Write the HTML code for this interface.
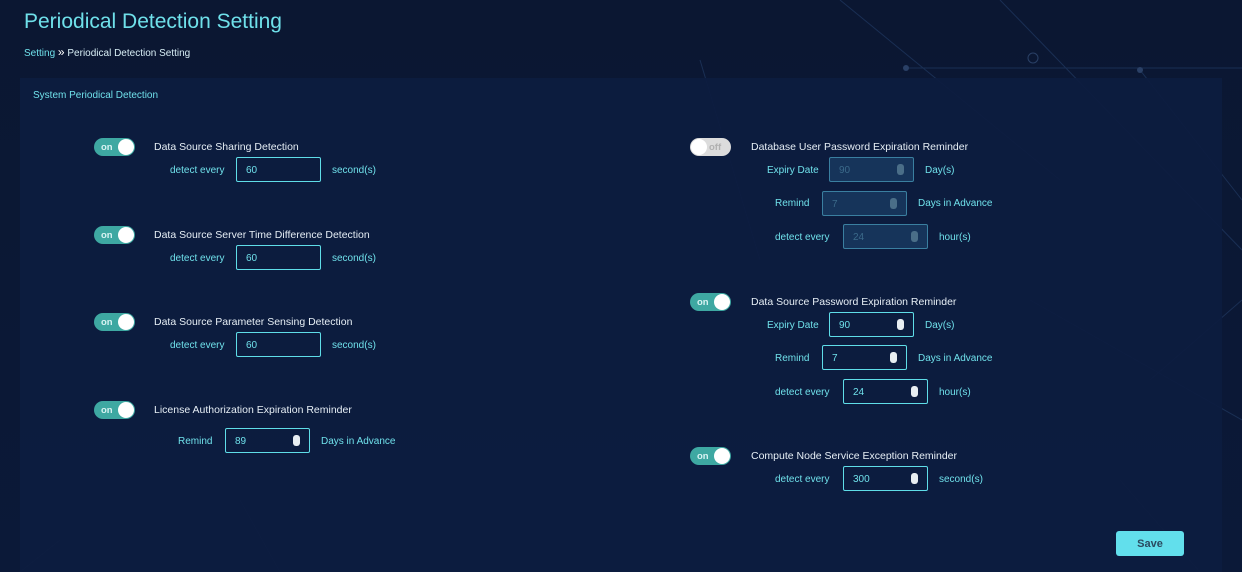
<!DOCTYPE html>
<html><head><meta charset="utf-8"><style>
*{margin:0;padding:0;box-sizing:border-box}
body{width:1242px;height:572px;overflow:hidden;background:linear-gradient(180deg,#0b1732 0%,#0b1938 100%);font-family:"Liberation Sans",sans-serif;position:relative;color:#6fe0ea}
.a{position:absolute;white-space:nowrap}
h1{position:absolute;left:24px;top:10px;font-size:21px;font-weight:normal;color:#6fe0ea}
.panel{position:absolute;left:20px;top:78px;width:1202px;height:494px;background:#0d1c3f;opacity:.95}
.lbl{font-size:10.5px;color:#e6eef5;margin-top:1px}
.t{font-size:10px;color:#6fe0ea;margin-top:1px}
.tg{position:absolute;width:41px;height:18px;border-radius:9px;background:#3ea8a2}
.tg:after{content:"";position:absolute;right:1px;top:1px;width:16px;height:16px;border-radius:50%;background:#fff}
.tg span{position:absolute;left:7px;top:4px;font-size:9.5px;font-weight:bold;color:#d8f3f3}
.tg.off{background:#dcdcdc}
.tg.off:after{left:1px;right:auto}
.tg.off span{left:19px;color:#b0b0b0}
.in{position:absolute;height:25px;border:1.5px solid #5fdde8;border-radius:2px;font-size:10px;color:#6fe0ea;padding:7px 0 0 9px}
.in.d{border-color:#3a7fa0;background:#16345a;color:#3b6a8a}
.sp{position:absolute;right:9px;top:6px;width:7px;height:11px;border-radius:3px;background:#e8eef2}
.in.d .sp{background:#4a6e88}
.btn{position:absolute;left:1116px;top:531px;width:68px;height:25px;background:#62dfec;border-radius:3px;font-size:11px;font-weight:bold;color:#2a4a60;text-align:center;line-height:26px}
</style></head><body>
<svg class="a" style="left:0;top:0" width="1242" height="572"><g stroke="#1a2f54" stroke-width="1" fill="none">
<line x1="840" y1="0" x2="1060" y2="180"/><line x1="905" y1="68" x2="1242" y2="68"/><line x1="1140" y1="70" x2="1242" y2="200"/><line x1="1000" y1="0" x2="1242" y2="250"/><line x1="1030" y1="300" x2="1242" y2="420"/><line x1="1150" y1="380" x2="1242" y2="300"/><line x1="60" y1="540" x2="20" y2="572"/><line x1="240" y1="500" x2="280" y2="572"/><line x1="700" y1="60" x2="760" y2="260"/><line x1="1120" y1="480" x2="1200" y2="572"/>
</g><circle cx="1033" cy="58" r="5" fill="none" stroke="#2a4066"/><circle cx="906" cy="68" r="3" fill="#2a4066"/><circle cx="1140" cy="70" r="3" fill="#2a4066"/></svg>
<h1>Periodical Detection Setting</h1>
<div class="a" style="left:24px;top:45px;font-size:10px;color:#6fe0ea">Setting <span style="color:#fff;font-size:12px">»</span> <span style="color:#d8eef5">Periodical Detection Setting</span></div>
<div class="panel"></div>
<div class="a t" style="left:33px;top:89px">System Periodical Detection</div>

<div class="tg" style="left:94px;top:138px"><span>on</span></div>
<div class="a lbl" style="left:154px;top:140px">Data Source Sharing Detection</div>
<div class="a t" style="left:170px;top:164px">detect every</div><div class="in" style="left:236px;top:157px;width:85px">60</div><div class="a t" style="left:332px;top:164px">second(s)</div>

<div class="tg" style="left:94px;top:226px"><span>on</span></div>
<div class="a lbl" style="left:154px;top:228px">Data Source Server Time Difference Detection</div>
<div class="a t" style="left:170px;top:252px">detect every</div><div class="in" style="left:236px;top:245px;width:85px">60</div><div class="a t" style="left:332px;top:252px">second(s)</div>

<div class="tg" style="left:94px;top:313px"><span>on</span></div>
<div class="a lbl" style="left:154px;top:315px">Data Source Parameter Sensing Detection</div>
<div class="a t" style="left:170px;top:339px">detect every</div><div class="in" style="left:236px;top:332px;width:85px">60</div><div class="a t" style="left:332px;top:339px">second(s)</div>

<div class="tg" style="left:94px;top:401px"><span>on</span></div>
<div class="a lbl" style="left:154px;top:403px">License Authorization Expiration Reminder</div>
<div class="a t" style="left:178px;top:435px">Remind</div><div class="in" style="left:225px;top:428px;width:85px">89<div class="sp"></div></div><div class="a t" style="left:321px;top:435px">Days in Advance</div>

<div class="tg off" style="left:690px;top:138px"><span>off</span></div>
<div class="a lbl" style="left:751px;top:140px">Database User Password Expiration Reminder</div>
<div class="a t" style="left:767px;top:164px">Expiry Date</div><div class="in d" style="left:829px;top:157px;width:85px">90<div class="sp"></div></div><div class="a t" style="left:925px;top:164px">Day(s)</div>
<div class="a t" style="left:775px;top:197px">Remind</div><div class="in d" style="left:822px;top:191px;width:85px">7<div class="sp"></div></div><div class="a t" style="left:918px;top:197px">Days in Advance</div>
<div class="a t" style="left:775px;top:231px">detect every</div><div class="in d" style="left:843px;top:224px;width:85px">24<div class="sp"></div></div><div class="a t" style="left:939px;top:231px">hour(s)</div>

<div class="tg" style="left:690px;top:293px"><span>on</span></div>
<div class="a lbl" style="left:751px;top:295px">Data Source Password Expiration Reminder</div>
<div class="a t" style="left:767px;top:319px">Expiry Date</div><div class="in" style="left:829px;top:312px;width:85px">90<div class="sp"></div></div><div class="a t" style="left:925px;top:319px">Day(s)</div>
<div class="a t" style="left:775px;top:352px">Remind</div><div class="in" style="left:822px;top:345px;width:85px">7<div class="sp"></div></div><div class="a t" style="left:918px;top:352px">Days in Advance</div>
<div class="a t" style="left:775px;top:386px">detect every</div><div class="in" style="left:843px;top:379px;width:85px">24<div class="sp"></div></div><div class="a t" style="left:939px;top:386px">hour(s)</div>

<div class="tg" style="left:690px;top:447px"><span>on</span></div>
<div class="a lbl" style="left:751px;top:449px">Compute Node Service Exception Reminder</div>
<div class="a t" style="left:775px;top:473px">detect every</div><div class="in" style="left:843px;top:466px;width:85px">300<div class="sp"></div></div><div class="a t" style="left:939px;top:473px">second(s)</div>

<div class="btn">Save</div>
</body></html>
